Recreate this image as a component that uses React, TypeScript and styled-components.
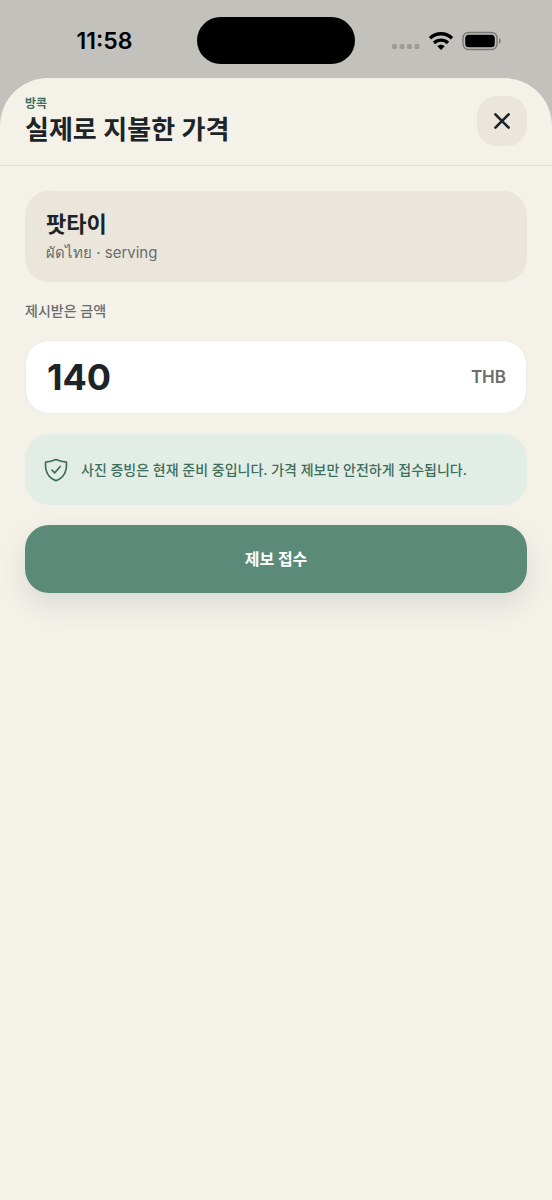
import React, { useState } from "react";
import styled, { createGlobalStyle } from "styled-components";

const color = {
  sheet: "#f4f1e9",
  backdrop: "#c3c1bc",
  sand: "#eae6db",
  line: "#dfddd6",
  ink: "#1c2427",
  muted: "#6b6c6d",
  green: "#5b8b78",
  deepGreen: "#3f6f5c",
  mint: "#e2ede6",
};

const GlobalStyle = createGlobalStyle`
  *, *::before, *::after { box-sizing: border-box; }
  body {
    margin: 0;
    background: ${color.backdrop};
    color: ${color.ink};
    font-family: Inter, "Noto Sans CJK KR", sans-serif;
  }
  h1, h2, p { margin: 0; }
  button, input { font: inherit; color: inherit; }
`;

const Screen = styled.div`
  min-height: 100vh;
  display: flex;
  flex-direction: column;
`;

const StatusBar = styled.div`
  display: grid;
  grid-template-columns: 1fr 158px 1fr;
  align-items: center;
  padding: 17px 0 14px;
  color: #000;
`;

const Clock = styled.time`
  justify-self: center;
  padding-left: 12px;
  font-size: 23px;
  font-weight: 600;
  line-height: 28px;
`;

const Island = styled.div`
  height: 47px;
  border-radius: 24px;
  background: #000;
`;

const StatusIcons = styled.div`
  display: flex;
  justify-content: center;
  align-items: center;
  gap: 8px;
  padding-right: 14px;
`;

const Sheet = styled.main`
  flex: 1;
  background: ${color.sheet};
  border-radius: 48px 48px 0 0;
`;

const Header = styled.header`
  display: flex;
  justify-content: space-between;
  align-items: center;
  padding: 17px 25px 18px;
  border-bottom: 1px solid ${color.line};
`;

const City = styled.p`
  font-size: 12px;
  font-weight: 600;
  line-height: 18px;
  color: ${color.deepGreen};
`;

const Title = styled.h1`
  font-size: 26px;
  font-weight: 600;
  line-height: 34px;
`;

const CloseButton = styled.button`
  display: grid;
  place-items: center;
  width: 50px;
  height: 50px;
  padding: 0;
  border: 0;
  border-radius: 20px;
  background: ${color.sand};
`;

const Form = styled.form`
  display: flex;
  flex-direction: column;
  gap: 20px;
  padding: 25px;
`;

const ItemCard = styled.section`
  padding: 17px 21px;
  border-radius: 24px;
  background: ${color.sand};
`;

const ItemName = styled.h2`
  font-size: 22px;
  font-weight: 600;
  line-height: 33px;
`;

const ItemDetail = styled.p`
  font-size: 15px;
  line-height: 24px;
  color: ${color.muted};
`;

const FieldLabel = styled.label`
  font-size: 14px;
  font-weight: 500;
  line-height: 18px;
  color: ${color.muted};
`;

const AmountField = styled.div`
  display: flex;
  align-items: center;
  height: 74px;
  padding: 0 20px 0 21px;
  border: 1px solid #eceae5;
  border-radius: 24px;
  background: #fff;
`;

const AmountInput = styled.input`
  flex: 1;
  min-width: 0;
  padding: 0;
  border: 0;
  outline: 0;
  background: transparent;
  font-size: 36px;
  font-weight: 700;
  line-height: 44px;
`;

const Currency = styled.span`
  font-size: 17px;
  font-weight: 600;
  color: ${color.muted};
`;

const Notice = styled.div`
  display: flex;
  align-items: center;
  gap: 12px;
  min-height: 71px;
  padding: 0 18px;
  border-radius: 24px;
  background: ${color.mint};
  color: ${color.deepGreen};
  font-size: 14px;
  font-weight: 500;
  line-height: 22px;
`;

const SubmitButton = styled.button`
  height: 68px;
  padding: 0 0 2px;
  border: 0;
  border-radius: 24px;
  background: ${color.green};
  box-shadow: 0 12px 28px rgba(28, 48, 42, 0.11);
  color: #fff;
  font-size: 16px;
  font-weight: 700;
`;

const SignalDots = () => (
  <svg width="28" height="18" viewBox="0 0 28 18" fill="#9c9b97" aria-hidden="true">
    {[0, 7.5, 15, 22.5].map((x) => (
      <rect key={x} x={x} y="12" width="5" height="5" rx="1.5" />
    ))}
  </svg>
);

const WifiIcon = () => (
  <svg width="26" height="18" viewBox="0 0 26 18" fill="none" stroke="#000" strokeWidth="3.4" aria-hidden="true">
    <path d="M2 6.2C8.2.3 17.8.3 24 6.2" />
    <path d="M6 10.9c4-3.7 10-3.7 14 0" />
    <path d="M9.3 14.3c2-2 5.4-2 7.4 0L13 18z" fill="#000" stroke="none" />
  </svg>
);

const BatteryIcon = () => (
  <svg width="40" height="20" viewBox="0 0 40 20" aria-hidden="true">
    <rect x="1" y="1.5" width="34" height="17" rx="5.5" fill="none" stroke="#787773" strokeWidth="1.4" />
    <rect x="3.2" y="3.7" width="29.6" height="12.6" rx="3.6" fill="#000" />
    <path d="M37 7.3c2.3.6 2.3 4.8 0 5.4z" fill="#787773" />
  </svg>
);

const CloseIcon = () => (
  <svg width="18" height="18" viewBox="0 0 18 18" fill="none" stroke="currentColor" strokeWidth="2.7" strokeLinecap="round" aria-hidden="true">
    <path d="M2.4 2.4l13.2 13.2M15.6 2.4L2.4 15.6" />
  </svg>
);

const ShieldIcon = () => (
  <svg width="26" height="26" viewBox="0 0 26 26" fill="none" stroke="currentColor" strokeWidth="1.7" strokeLinecap="round" strokeLinejoin="round" aria-hidden="true">
    <path d="M13 2.6Q8 4.9 2.6 5.1C1.9 14.5 5.6 21 13 23.6 20.4 21 24.1 14.5 23.4 5.1Q18 4.9 13 2.6z" />
    <path d="M9 13.2l2.7 2.7 5.5-6.4" />
  </svg>
);

export default function App() {
  const [amount, setAmount] = useState("140");

  return (
    <Screen>
      <GlobalStyle />
      <StatusBar>
        <Clock>11:58</Clock>
        <Island />
        <StatusIcons>
          <SignalDots />
          <WifiIcon />
          <BatteryIcon />
        </StatusIcons>
      </StatusBar>
      <Sheet>
        <Header>
          <div>
            <City>방콕</City>
            <Title>실제로 지불한 가격</Title>
          </div>
          <CloseButton type="button" aria-label="닫기">
            <CloseIcon />
          </CloseButton>
        </Header>
        <Form onSubmit={(event) => event.preventDefault()}>
          <ItemCard>
            <ItemName>팟타이</ItemName>
            <ItemDetail>ผัดไทย · serving</ItemDetail>
          </ItemCard>
          <FieldLabel htmlFor="amount">제시받은 금액</FieldLabel>
          <AmountField>
            <AmountInput
              id="amount"
              inputMode="numeric"
              value={amount}
              onChange={(event) => setAmount(event.target.value)}
            />
            <Currency>THB</Currency>
          </AmountField>
          <Notice>
            <ShieldIcon />
            <p>사진 증빙은 현재 준비 중입니다. 가격 제보만 안전하게 접수됩니다.</p>
          </Notice>
          <SubmitButton type="submit">제보 접수</SubmitButton>
        </Form>
      </Sheet>
    </Screen>
  );
}
